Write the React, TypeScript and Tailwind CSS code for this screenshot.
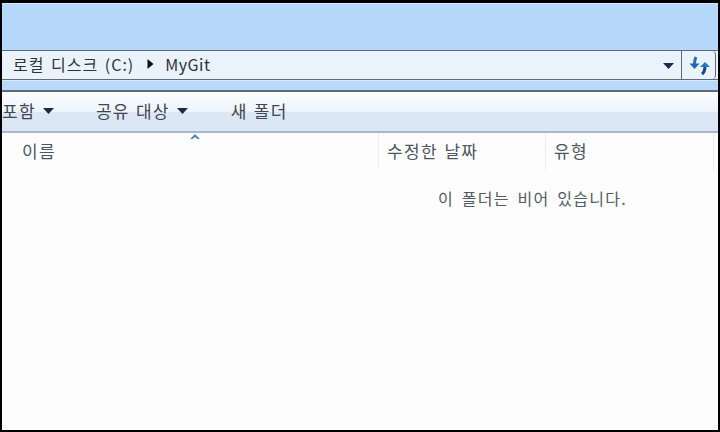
import React from "react";

function Caret({ className }: { className: string }) {
  return (
    <svg className={className} width="11" height="6" viewBox="0 0 11 6">
      <path d="M0 0h11L5.500 6z" fill="#1a2a48" />
    </svg>
  );
}

function RefreshIcon() {
  return (
    <svg width="22" height="22" viewBox="0 0 22 22" fill="none">
      <path d="M8 3c-1 2-1.500 4-1.500 7" stroke="#2a6fb8" strokeWidth="3" />
      <path d="M1.500 9.500h10L6.500 15z" fill="#1f67b4" />
      <path d="M14 20c2-1.500 3-4 3-8" stroke="#17477f" strokeWidth="3" />
      <path d="M12 13l5-5 5 5z" fill="#2a78c4" />
    </svg>
  );
}

export default function App() {
  return (
    <div className="flex h-[432px] w-[720px] flex-col border-x-2 border-t-[3px] border-b-2 border-black bg-[#fdfdfd] font-['Noto_Sans_CJK_KR','Noto_Sans',sans-serif] text-[16px] tracking-[1px] text-[#3f4650] [word-spacing:2px]">
      <div className="h-[47px] border-t border-[#d5e9fd] bg-[#b5d8fb]" />

      <div className="flex h-[30px] border-y border-[#5f6b72] bg-[#eaf3fc]">
        <div className="flex flex-1 items-center pb-[2px] pl-[11px] text-[#2d3238]">
          <span className="whitespace-nowrap">로컬 디스크 (C:)</span>
          <svg className="ml-[13px]" width="7" height="10" viewBox="0 0 7 10">
            <path d="M0.500 0l6 5-6 5z" fill="#111" />
          </svg>
          <span className="ml-[11px] tracking-[0.5px]">MyGit</span>
          <Caret className="ml-auto mr-[7px] mt-[3px]" />
        </div>
        <div className="mr-[2px] flex w-[35px] items-center justify-center rounded-r-sm border-x border-[#5f6b72]">
          <RefreshIcon />
        </div>
      </div>

      <div className="h-[10px] border-t border-[#d8eafc] bg-[#b9d9f8]" />

      <div className="h-[43px] border-y-2 border-t-[#5f6b72] border-b-[#a9b8ce] bg-[linear-gradient(to_bottom,#fcfdff_0%,#edf4fc_50%,#dde7f4_52%,#dbe6f4_100%)] text-[17px] tracking-[1.3px] [word-spacing:1px]">
        <div className="flex h-full items-center pb-[1px]">
          <span>포함</span>
          <Caret className="ml-[7px]" />
          <span className="ml-[42px]">공유 대상</span>
          <Caret className="ml-[7px]" />
          <span className="ml-[43px]">새 폴더</span>
        </div>
      </div>

      <div className="relative flex h-[37px] text-[17px] leading-[35px] tracking-[1.3px] text-[#4c5661] [word-spacing:1.500px]">
        <svg className="absolute left-[188px] top-[1px]" width="10" height="6" viewBox="0 0 10 6">
          <path d="M5 0l5 5H7.500L5 3 2.500 5H0z" fill="#4f87a8" />
        </svg>
        <div className="w-[376px] pl-[20px]">이름</div>
        <div className="w-[167px] border-l border-[#e6edf4] pl-[8px]">수정한 날짜</div>
        <div className="flex-1 border-l border-[#e6edf4] pl-[8px]">유형</div>
        <div className="mr-[4px] border-l border-[#e6edf4]" />
      </div>

      <div className="pl-[436px] pt-[17px] leading-[22px] tracking-[1.25px] text-[#555b63] [word-spacing:3px]">
        이 폴더는 비어 있습니다.
      </div>
    </div>
  );
}
